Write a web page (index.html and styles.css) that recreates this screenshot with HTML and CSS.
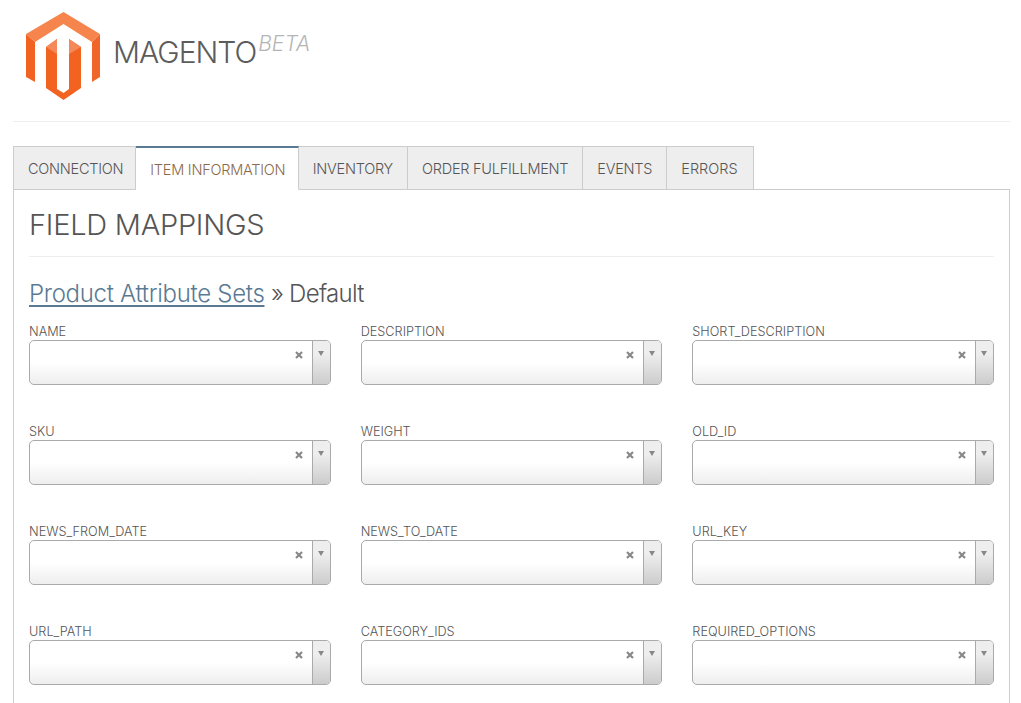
FILE: index.html
```html
<!DOCTYPE html>
<html lang="en">
<head>
<meta charset="utf-8">
<title>Magento Beta</title>
<link rel="stylesheet" href="styles.css">
</head>
<body>
<div class="page">
  <header class="brand">
    <svg class="logo" viewBox="26 12 75 88" width="75" height="88" aria-hidden="true">
      <polygon fill="#f5854d" points="63.5,12 100,34 92,42 63.5,24 35,42 26,34"/>
      <polygon fill="#f26322" points="26,34 35,42 35,82 26,77"/>
      <polygon fill="#f0662a" points="100,34 92,42 92,82 100,77"/>
      <polygon fill="#f26322" points="46,47 57,39 57,89 63.5,93 69,89 69,39 81,47 81,88 63.5,100 46,88"/>
      <polygon fill="#f5895a" points="46,47 57,39 57,54"/>
      <polygon fill="#f5895a" points="69,39 81,47 69,54"/>
    </svg>
    <div class="wordmark">MAGENTO<span class="beta">BETA</span></div>
  </header>

  <nav class="tabs">
    <a class="tab">CONNECTION</a>
    <a class="tab active">ITEM INFORMATION</a>
    <a class="tab">INVENTORY</a>
    <a class="tab">ORDER FULFILLMENT</a>
    <a class="tab">EVENTS</a>
    <a class="tab">ERRORS</a>
  </nav>

  <main class="panel">
    <h1 class="title">FIELD MAPPINGS</h1>
    <h2 class="crumb"><a class="crumb-link">Product Attribute Sets</a> <span class="crumb-rest">» Default</span></h2>
    <div class="fields">
      <div class="field"><label class="label">NAME</label><div class="select"><span class="clear"><svg viewBox="0 0 8 8" width="8" height="8"><path d="M1 1L7 7M7 1L1 7"/></svg></span><span class="arrow"></span></div></div>
      <div class="field"><label class="label">DESCRIPTION</label><div class="select"><span class="clear"><svg viewBox="0 0 8 8" width="8" height="8"><path d="M1 1L7 7M7 1L1 7"/></svg></span><span class="arrow"></span></div></div>
      <div class="field"><label class="label">SHORT_DESCRIPTION</label><div class="select"><span class="clear"><svg viewBox="0 0 8 8" width="8" height="8"><path d="M1 1L7 7M7 1L1 7"/></svg></span><span class="arrow"></span></div></div>
      <div class="field"><label class="label">SKU</label><div class="select"><span class="clear"><svg viewBox="0 0 8 8" width="8" height="8"><path d="M1 1L7 7M7 1L1 7"/></svg></span><span class="arrow"></span></div></div>
      <div class="field"><label class="label">WEIGHT</label><div class="select"><span class="clear"><svg viewBox="0 0 8 8" width="8" height="8"><path d="M1 1L7 7M7 1L1 7"/></svg></span><span class="arrow"></span></div></div>
      <div class="field"><label class="label">OLD_ID</label><div class="select"><span class="clear"><svg viewBox="0 0 8 8" width="8" height="8"><path d="M1 1L7 7M7 1L1 7"/></svg></span><span class="arrow"></span></div></div>
      <div class="field"><label class="label">NEWS_FROM_DATE</label><div class="select"><span class="clear"><svg viewBox="0 0 8 8" width="8" height="8"><path d="M1 1L7 7M7 1L1 7"/></svg></span><span class="arrow"></span></div></div>
      <div class="field"><label class="label">NEWS_TO_DATE</label><div class="select"><span class="clear"><svg viewBox="0 0 8 8" width="8" height="8"><path d="M1 1L7 7M7 1L1 7"/></svg></span><span class="arrow"></span></div></div>
      <div class="field"><label class="label">URL_KEY</label><div class="select"><span class="clear"><svg viewBox="0 0 8 8" width="8" height="8"><path d="M1 1L7 7M7 1L1 7"/></svg></span><span class="arrow"></span></div></div>
      <div class="field"><label class="label">URL_PATH</label><div class="select"><span class="clear"><svg viewBox="0 0 8 8" width="8" height="8"><path d="M1 1L7 7M7 1L1 7"/></svg></span><span class="arrow"></span></div></div>
      <div class="field"><label class="label">CATEGORY_IDS</label><div class="select"><span class="clear"><svg viewBox="0 0 8 8" width="8" height="8"><path d="M1 1L7 7M7 1L1 7"/></svg></span><span class="arrow"></span></div></div>
      <div class="field"><label class="label">REQUIRED_OPTIONS</label><div class="select"><span class="clear"><svg viewBox="0 0 8 8" width="8" height="8"><path d="M1 1L7 7M7 1L1 7"/></svg></span><span class="arrow"></span></div></div>
    </div>
  </main>
</div>
</body>
</html>
```
FILE: styles.css
```css
html, body { margin: 0; padding: 0; height: 703px; overflow: hidden; background: #fff; }
body { font-family: Inter, "Liberation Sans", sans-serif; font-weight: 300; color: #555; }
.page { padding: 0 11px 0 13px; height: 703px; overflow: hidden; }

.brand { display: flex; align-items: flex-start; height: 121px; margin-left: 13px; padding-top: 12px; box-sizing: border-box; position: relative; }
.brand::after { content: ""; position: absolute; left: -13px; right: 0; bottom: -1px; height: 1px; background: #eee; }
.logo { display: block; flex: none; }
.wordmark { margin-left: 12px; margin-top: 21px; font-size: 30px; line-height: 38px; letter-spacing: -1px; color: #5c5c5c; }
.beta { font-size: 21px; font-style: italic; color: #b5b5b5; vertical-align: 12px; line-height: 0; margin-left: 2px; letter-spacing: 0; }

.tabs { display: flex; margin-top: 25px; height: 43px; position: relative; z-index: 1; }
.tab { box-sizing: border-box; height: 44px; padding: 0 14px; font-size: 14.5px; letter-spacing: -0.25px; line-height: 43px; color: #555; background: #eee; border: 1px solid #ccc; border-left: 0; }
.tab:first-child { border-left: 1px solid #ccc; padding-right: 12px; }
.tab:last-child { padding-right: 15px; letter-spacing: 0; }
.tab.active { background: #fff; border-top: 2px solid #5a7a94; border-bottom-color: #fff; color: #8a6a4a; padding-right: 12.5px; }

.panel { box-sizing: border-box; height: 600px; border: 1px solid #ccc; padding: 0 15px; width: 997px; }
.title { margin: 0; height: 67px; padding-top: 17px; box-sizing: border-box; font-size: 29px; line-height: 36px; letter-spacing: -0.25px; font-weight: 300; color: #555; border-bottom: 1px solid #eee; }
.crumb { margin: 21px 0 0; font-size: 24px; line-height: 32px; letter-spacing: -0.3px; font-weight: 300; color: #555; }
.crumb-link { color: #5a7a94; text-decoration: underline; text-decoration-thickness: 2px; text-underline-offset: 3px; }
.crumb-rest { letter-spacing: -0.7px; }

.fields { display: grid; grid-template-columns: repeat(3, 1fr); column-gap: 30px; row-gap: 39px; margin-top: 14px; }
.label { display: block; height: 16px; font-size: 12.7px; line-height: 16px; color: #555; }
.select { box-sizing: border-box; height: 45px; display: flex; justify-content: flex-end; align-items: flex-start; border: 1px solid #aaa; border-radius: 5px; background: linear-gradient(#fff 50%, #eee); overflow: hidden; }
.clear { width: 8px; height: 8px; margin: 10px 9px 0 0; line-height: 0; }
.clear svg { display: block; }
.clear path { fill: none; stroke: #888; stroke-width: 2.2; }
.arrow { align-self: stretch; width: 17px; border-left: 1px solid #aaa; background: linear-gradient(#eee 30%, #ccc); position: relative; }
.arrow::after { content: ""; position: absolute; left: 5px; top: 10px; border: 3px solid transparent; border-top: 5px solid #888; border-bottom: 0; }
```
